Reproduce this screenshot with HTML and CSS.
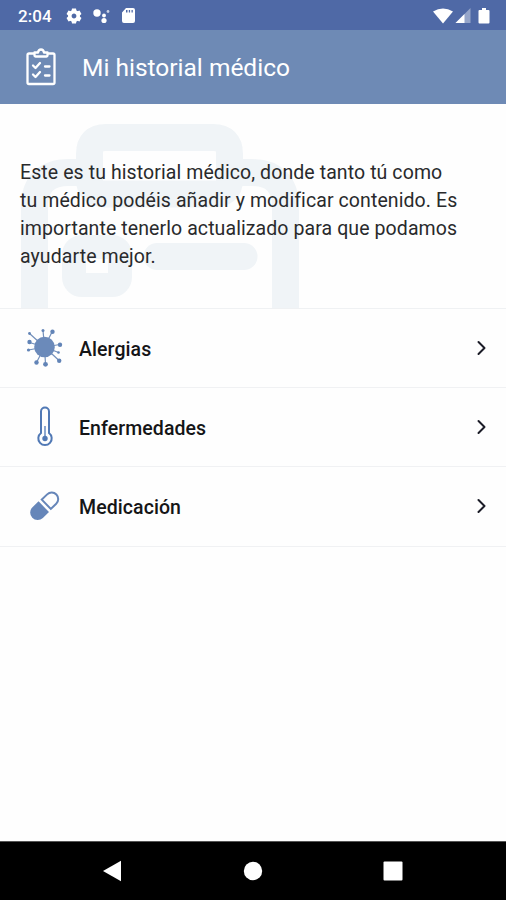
FILE: index.html
```html
<!DOCTYPE html>
<html lang="es">
<head>
<meta charset="utf-8">
<meta name="viewport" content="width=device-width">
<title>Mi historial médico</title>
<link rel="stylesheet" href="styles.css">
</head>
<body>
<div class="screen">
  <div class="status">
    <span class="clock">2:04</span>
    <svg class="status-left" width="72" height="20" viewBox="0 0 72 20" fill="#fff">
      <g transform="translate(8 10)"><circle r="4.200" fill="none" stroke="#fff" stroke-width="3.600"/><path d="M-2-7.500h4l.6 3h-5.200zM-2 7.500h4l.6-3h-5.200z"/><path transform="rotate(60)" d="M-2-7.500h4l.6 3h-5.200zM-2 7.500h4l.6-3h-5.200z"/><path transform="rotate(120)" d="M-2-7.500h4l.6 3h-5.200zM-2 7.500h4l.6-3h-5.200z"/></g>
      <circle cx="31" cy="7" r="3.700"/><circle cx="38" cy="9.500" r="1.900"/><circle cx="42" cy="5.500" r="1.400" opacity=".7"/><circle cx="38" cy="14.500" r="2.600"/>
      <path fill-rule="evenodd" d="M60 2h7q2 0 2 2v11q0 2-2 2h-9q-2 0-2-2V6.500zM60 4v2.500H61.500V4zM62.800 4v2.500h1.300V4zM65.500 4v2.500h1.300V4z"/>
    </svg>
    <svg class="status-right" width="60" height="20" viewBox="0 0 60 20" fill="#fff">
      <path d="M2 5.500Q12-.5 22 5.500L12 17.500z"/><path opacity=".4" d="M39.500 2v15h-15z"/><path d="M33.500 8v9h-9z"/><path d="M51 2h4v2h2.500q1 0 1 1v11.500q0 1-1 1h-9q-1 0-1-1V5q0-1 1-1H51z"/>
    </svg>
  </div>
  <header class="header">
    <svg class="clipboard" width="32" height="40" viewBox="0 0 32 40" fill="none" stroke="#fff" stroke-width="2.300" stroke-linecap="round" stroke-linejoin="round">
      <path d="M9 5.500H4Q2.500 5.500 2.500 7V34.500q0 1.500 1.500 1.500h24Q29.500 36 29.500 34.500V7Q29.500 5.500 28 5.500H23M9.500 7.500V4.500H13Q13.500 1.500 16 1.500t3 3h3.500v3q0 1-1 1h-11Q9.500 8.500 9.500 7.500z"/>
      <path d="m8 17.500 2.500 2.500 4.500-5M8 26.500l2.500 2.500 4.500-5M20 18.500h4.500M20 27.500h4.500"/>
    </svg>
    <h1>Mi historial médico</h1>
  </header>
  <section class="intro">
    <svg class="watermark" width="290" height="204" viewBox="15 104 290 204" fill="none" stroke="#f0f4f7" stroke-width="27">
      <path d="M34.500 320V207Q34.500 172.500 69 172.500H89.500V154Q89.500 137.500 106 137.500H213Q229.500 137.500 229.500 154V172.500H251Q285.500 172.500 285.500 207V320M89.500 172.500V180Q89.500 194 106 194H213Q229.500 194 229.500 180V172.500"/>
      <rect x="74" y="247" width="46" height="38" rx="8" stroke-width="24"/><path d="M157 256.500h87" stroke-linecap="round"/>
    </svg>
    <p>Este es tu historial médico, donde tanto tú como<br>tu médico podéis añadir y modificar contenido. Es<br>importante tenerlo actualizado para que podamos<br>ayudarte mejor.</p>
  </section>
  <nav class="menu">
    <a class="item">
      <svg class="icon" width="40" height="42" viewBox="0 0 40 42" stroke="#7390bb" fill="#6284b7"><path stroke-width="1.200" d="M19.500 20 4.500 6.500M19.500 20 18 3.500M19.500 20l8-16M19.500 20l-15-4.500M19.500 20l-16 3M19.500 20l-8 15.500M19.500 20l1 17M19.500 20 34 33.500M19.500 20l14 5.500M19.500 20l15.500-2.500"/><circle cx="19.500" cy="20" r="10.300" fill="#6b8aba" stroke="none"/><g stroke="none"><circle cx="4.500" cy="6.500" r="1.400"/><circle cx="18" cy="3.500" r="1.500"/><circle cx="27.500" cy="4.800" r="2.200"/><circle cx="4.500" cy="15" r="2.200"/><circle cx="3.500" cy="23" r="1.600"/><circle cx="11.500" cy="35.500" r="2.200"/><circle cx="20.500" cy="37.300" r="2.400"/><circle cx="34.200" cy="33.800" r="2.200"/><circle cx="33.500" cy="25.500" r="1.300"/><circle cx="35" cy="17.800" r="2.200"/></g></svg>
      <span class="label">Alergias</span>
      <svg class="chevron" width="12" height="18" viewBox="0 0 12 18"><path d="m2.500 3 6 6-6 6"/></svg>
    </a>
    <a class="item">
      <svg class="icon" width="40" height="42" viewBox="0 0 40 42" fill="none" stroke="#5179b5" stroke-width="2"><path d="M16 27V5.500a4 4 0 0 1 8 0V27a6.700 6.700 0 1 1-8 0z"/><path stroke-width="1.300" d="M20 20v12"/><circle cx="20" cy="32.500" r="2.700" fill="#5179b5" stroke="none"/></svg>
      <span class="label">Enfermedades</span>
      <svg class="chevron" width="12" height="18" viewBox="0 0 12 18"><path d="m2.500 3 6 6-6 6"/></svg>
    </a>
    <a class="item">
      <svg class="icon" width="40" height="42" viewBox="0 0 40 42"><g transform="translate(19.500 21) rotate(-44)"><path fill="#6686b9" d="M-1-7.500V7.500H-9.500a7.500 7.500 0 0 1 0-15z"/><path fill="none" stroke="#6686b9" stroke-width="2" d="M2.500-6.500V6.500H10a6.500 6.500 0 0 0 0-13z"/></g></svg>
      <span class="label">Medicación</span>
      <svg class="chevron" width="12" height="18" viewBox="0 0 12 18"><path d="m2.500 3 6 6-6 6"/></svg>
    </a>
  </nav>
  <div class="spacer"></div>
  <footer class="navbar">
    <svg width="20" height="22" viewBox="0 0 20 22"><path fill="#fff" d="M1 11 19 .800v20.400z"/></svg>
    <svg width="20" height="22" viewBox="0 0 20 22"><circle cx="10" cy="11" r="9.200" fill="#fff"/></svg>
    <svg width="20" height="22" viewBox="0 0 20 22"><rect x=".5" y="1.500" width="19" height="19" rx="1" fill="#fff"/></svg>
  </footer>
</div>
</body>
</html>
```
FILE: styles.css
```css
* { box-sizing: border-box; }
body { margin: 0; font-family: Roboto, "Liberation Sans", sans-serif; background: #fefefe; }
.screen { width: 506px; height: 900px; display: flex; flex-direction: column; overflow: hidden; }
.status { height: 30px; background: #4f69a6; color: #fff; display: flex; align-items: center; padding: 2px 15px 0 18px; }
.clock { font-size: 17px; font-weight: 500; width: 48px; letter-spacing: .1px; }
.status-right { margin-left: auto; }
.header { height: 74px; background: #6e8ab5; color: #fff; display: flex; align-items: center; padding: 1px 25px 0; }
.clipboard { margin-right: 25px; }
h1 { margin: 0; font-size: 24.500px; font-weight: 400; white-space: nowrap; }
.intro { position: relative; height: 205px; border-bottom: 1px solid #eff1f3; padding: 55px 20px 0; }
.watermark { position: absolute; left: 15px; top: 0; }
p { position: relative; margin: 0; font-size: 19.500px; letter-spacing: .09px; line-height: 28px; color: #292a2c; white-space: nowrap; }
.item { display: flex; align-items: center; height: 79.200px; border-bottom: 1px solid #f0f1f3; padding: 0 18px 0 25px; color: #151517; font-size: 19.500px; font-weight: 500; letter-spacing: .08px; }
.icon { margin-right: 14px; }
.label { padding-top: 3px; }
.chevron { margin-left: auto; fill: none; stroke: #1b1c27; stroke-width: 2; stroke-linecap: round; stroke-linejoin: round; }
.spacer { flex: 1; }
.navbar { height: 59px; background: #000; border-top: 1px solid #555; display: flex; justify-content: space-between; align-items: center; padding: 0 103px 0 102px; }
```
